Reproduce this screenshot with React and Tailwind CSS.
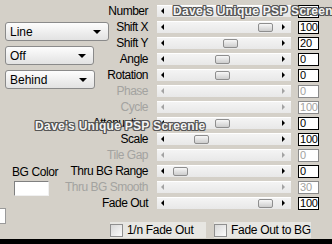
import React from 'react';

const rows = [
    { label: 'Number', value: '12', thumb: 16 },
    { label: 'Shift X', value: '100', thumb: 101 },
    { label: 'Shift Y', value: '20', thumb: 66 },
    { label: 'Angle', value: '0', thumb: 58 },
    { label: 'Rotation', value: '0', thumb: 58 },
    { label: 'Phase', value: '0', disabled: true },
    { label: 'Cycle', value: '100', disabled: true },
    { label: 'Attenuation', value: '0', thumb: 58 },
    { label: 'Scale', value: '100', thumb: 37 },
    { label: 'Tile Gap', value: '0', disabled: true },
    { label: 'Thru BG Range', value: '0', thumb: 16 },
    { label: 'Thru BG Smooth', value: '30', disabled: true },
    { label: 'Fade Out', value: '100', thumb: 101 },
];

const Select = ({ text, width }) => (
    <div
        className="h-[19px] ml-[5px] flex items-center justify-between pl-[4px] pr-[7px] rounded-[3px] border border-[#8a8a8a] bg-gradient-to-b from-[#fdfdfd] to-[#e2e2e2] text-[12px] text-black"
        style={{ width }}
    >
        <span>{text}</span>
        <span className="w-0 h-0 border-l-[4px] border-r-[4px] border-t-[4px] border-l-transparent border-r-transparent border-t-black"></span>
    </div>
);

const Slider = ({ thumb, disabled }) => {
    const arrow = disabled ? '#a3a3a3' : '#000';
    return (
        <div className="w-[134px] h-[12px] relative bg-gradient-to-b from-[#f4f4f4] to-[#e8e8e8] border-t border-white">
            {/* arrows */}
            <span
                className="absolute left-[4px] top-[2px] w-0 h-0 border-t-[3px] border-b-[3px] border-r-[3px] border-t-transparent border-b-transparent"
                style={{ borderRightColor: arrow }}
            ></span>
            <span
                className="absolute left-[125px] top-[2px] w-0 h-0 border-t-[3px] border-b-[3px] border-l-[3px] border-t-transparent border-b-transparent"
                style={{ borderLeftColor: arrow }}
            ></span>
            {!disabled && (
                <span
                    className="absolute top-[1px] w-[15px] h-[9px] rounded-[2px] border border-[#8e8e8e] bg-gradient-to-b from-[#f7f7f7] to-[#cdcdcd]"
                    style={{ left: thumb }}
                ></span>
            )}
        </div>
    );
};

const Check = ({ text, width }) => (
    <div className="h-[16px] flex items-center gap-[4px] bg-[#e7e6e2] text-[12px] tracking-[-0.3px] whitespace-nowrap text-black" style={{ width }}>
        <span className="w-[13px] h-[13px] shrink-0 border border-[#8f8f8f] bg-gradient-to-br from-[#d8d8d8] to-[#fbfbfb]"></span>
        <span>{text}</span>
    </div>
);

const Watermark = ({ className }) => (
    <div
        className={`absolute whitespace-nowrap font-bold text-[12px] tracking-[0.3px] leading-[12px] text-[#f4f4f4] [text-shadow:1px_0_0_#555,-1px_0_0_#555,0_1px_0_#555,0_-1px_0_#555,1px_1px_0_#555,-1px_-1px_0_#555,1px_-1px_0_#555,-1px_1px_0_#555] ${className}`}
    >
        Dave's Unique PSP Screenie
    </div>
);

export default function App() {
    return (
        <div
            className="w-[332px] h-[244px] relative overflow-hidden bg-[#d4d0c8] flex flex-col"
            style={{ fontFamily: '"Liberation Sans", Arial, sans-serif' }}
        >
            <div className="flex flex-1">
                {/* Left column */}
                <div className="w-[68px] flex flex-col pt-[22px] gap-[5px] shrink-0">
                    <Select text="Line" width={104} />
                    <Select text="Off" width={89} />
                    <Select text="Behind" width={90} />
                    <div className="mt-[71px] flex flex-col items-start">
                        <div className="ml-[12px] text-[12px] tracking-[-0.4px] leading-[14px] text-black">BG Color</div>
                        <div className="ml-[14px] mt-[2px] w-[35px] h-[15px] bg-white border border-t-[#808080] border-l-[#808080] border-r-[#f0f0f0] border-b-[#f0f0f0]"></div>
                        <div className="mt-[12px] w-[6px] h-[16px] bg-white border-y border-r border-[#9a9a9a]"></div>
                    </div>
                </div>

                {/* Right panel */}
                <div className="flex flex-col pt-[3px]">
                    {rows.map((r) => (
                        <div key={r.label} className="h-[16px] flex items-center">
                            <div
                                className={`w-[80px] flex justify-end whitespace-nowrap font-normal text-[12px] tracking-[-0.5px] leading-[13px] ${r.disabled ? 'text-[#a3a3a0]' : 'text-black'}`}
                            >
                                {r.label}
                            </div>
                            <div className="ml-[9px]">
                                <Slider thumb={r.thumb} disabled={r.disabled} />
                            </div>
                            <div
                                className={`ml-[7px] w-[21px] h-[13px] bg-white border pl-[1px] text-[11px] tracking-[-0.2px] leading-[11px] whitespace-nowrap overflow-hidden ${r.disabled ? 'border-[#8a8a8a] text-[#a3a3a0]' : 'border-black text-black'}`}
                            >
                                {r.value}
                            </div>
                        </div>
                    ))}
                    <div className="mt-[11px] ml-[42px] flex gap-[8px]">
                        <Check text="1/n Fade Out" width={96} />
                        <Check text="Fade Out to BG" width={97} />
                    </div>
                </div>
            </div>
            <div className="h-[5px] bg-black shrink-0"></div>

            <Watermark className="left-[173px] top-[5px]" />
            <Watermark className="left-[35px] top-[120px]" />
        </div>
    );
}
